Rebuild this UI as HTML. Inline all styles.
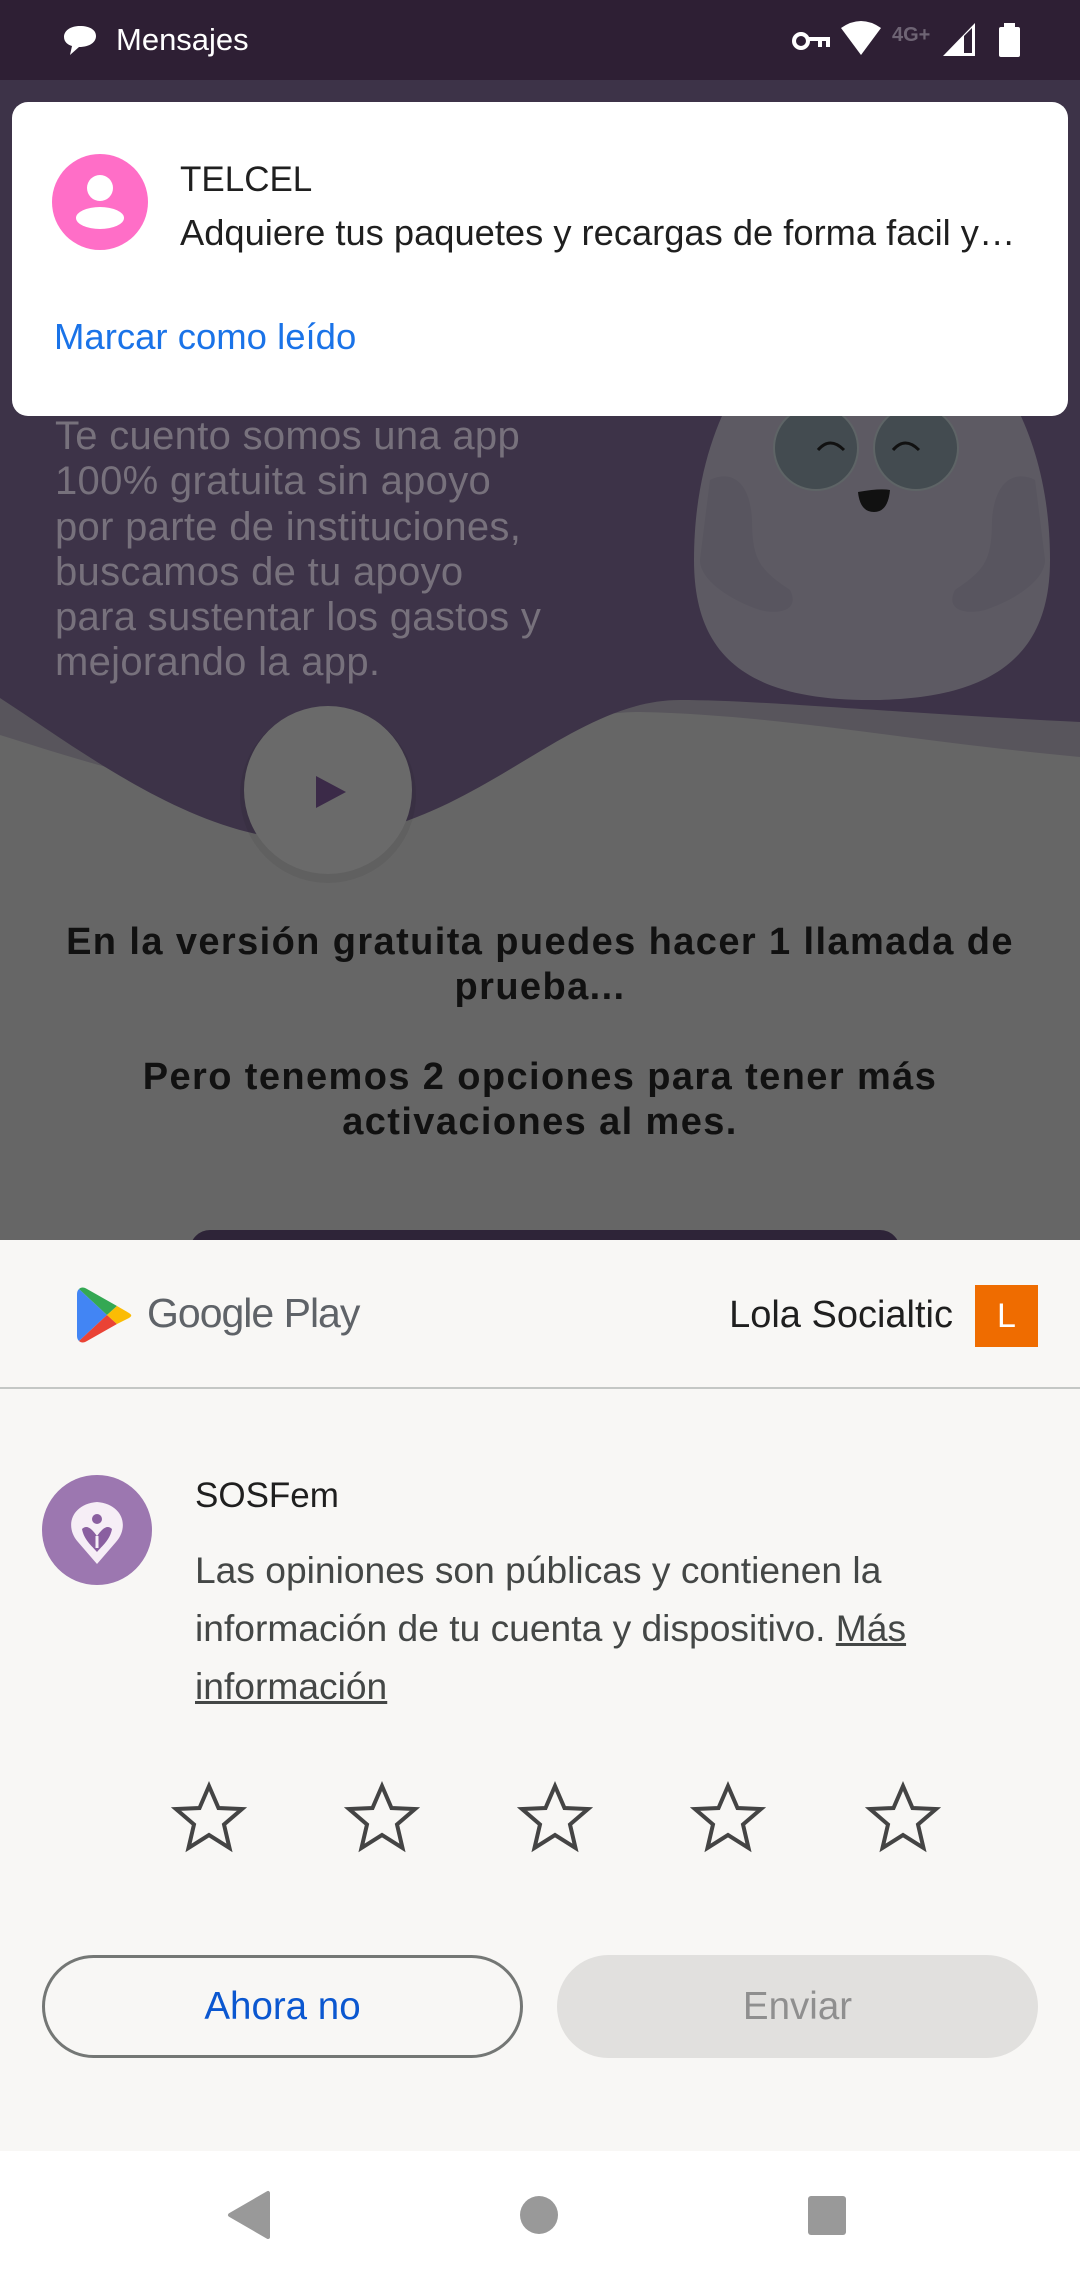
<!DOCTYPE html>
<html><head><meta charset="utf-8"><style>
*{margin:0;padding:0;box-sizing:border-box}
body{width:1080px;height:2280px;overflow:hidden;position:relative;font-family:"Liberation Sans",sans-serif;background:#666}
.abs{position:absolute}
.t{white-space:nowrap}
</style></head><body>
<svg class="abs" style="left:0;top:0" width="1080" height="1240">
<rect width="1080" height="1240" fill="#666666"/>
<path d="M0,0 H1080 V757 C900,740 780,715 640,712 C520,712 430,800 280,800 C170,790 80,760 0,735 Z" fill="#58555c"/>
<path d="M0,0 H1080 V722 C880,712 760,700 680,700 C560,700 470,840 300,840 C190,835 80,750 0,698 Z" fill="#3d3348"/>
<path d="M694,560 C694,400 780,300 870,300 C960,300 1050,400 1050,560 C1050,650 1000,700 870,700 C740,700 694,650 694,560 Z" fill="#5d5a63"/>
<path d="M710,480 C730,470 750,480 752,520 C752,560 760,570 790,590 C800,610 780,615 760,610 C730,600 700,580 700,560 Z" fill="#58555f"/>
<path d="M1035,480 C1015,470 995,480 992,520 C992,560 985,570 955,590 C945,610 965,615 985,610 C1015,600 1045,580 1045,560 Z" fill="#58555f"/>
<circle cx="816" cy="448" r="42" fill="#434b50" stroke="#5e6466" stroke-width="2"/>
<circle cx="916" cy="448" r="42" fill="#434b50" stroke="#5e6466" stroke-width="2"/>
<path d="M818,450 q12,-14 26,0" stroke="#111" stroke-width="3" fill="none"/>
<path d="M893,450 q12,-14 26,0" stroke="#111" stroke-width="3" fill="none"/>
<path d="M858,492 q22,-4 32,-2 q-2,22 -16,22 q-14,0 -16,-20 Z" fill="#111"/>
<circle cx="328" cy="795" r="88" fill="#000" opacity="0.06"/>
<circle cx="328" cy="790" r="84" fill="#6a6a6a"/>
<path d="M316,776 L346,792 L316,808 Z" fill="#3b2a48"/>
<rect x="190" y="1230" width="710" height="40" rx="20" fill="#2e2438"/>
</svg>
<div class="abs t" style="left:55px;top:414px;font-size:40px;line-height:45.3px;letter-spacing:0.3px;color:#77717c">Te cuento somos una app<br>100% gratuita sin apoyo<br>por parte de instituciones,<br>buscamos de tu apoyo<br>para sustentar los gastos y<br>mejorando la app.</div>
<div class="abs" style="left:0;width:1080px;top:920px;text-align:center;font-size:38px;font-weight:bold;line-height:45px;letter-spacing:1.4px;color:#111">En la versión gratuita puedes hacer 1 llamada de<br>prueba...<br><br>Pero tenemos 2 opciones para tener más<br>activaciones al mes.</div>

<div class="abs" style="left:0;top:0;width:1080px;height:80px;background:#2e1f34"></div>
<svg class="abs" style="left:62px;top:24px" width="36" height="34"><path d="M18,2 C8,2 2,7 2,13 C2,18 6,21 10,22 L8,31 L17,23 C28,23 34,18 34,12 C34,6 28,2 18,2 Z" fill="#fff"/></svg>
<div class="abs t" style="left:116px;top:22px;font-size:31px;color:#fff">Mensajes</div>
<svg class="abs" style="left:790px;top:20px" width="240" height="40">
<circle cx="11" cy="21" r="7" fill="none" stroke="#fff" stroke-width="4"/><path d="M18,19 H38 V27 M30,21 V27" stroke="#fff" stroke-width="4" fill="none"/>
<path d="M51,8 Q71,-6 91,8 L71,35 Z" fill="#fff"/>
<text x="102" y="21" font-family="Liberation Sans" font-weight="bold" font-size="20" fill="#6e6474">4G+</text>
<path d="M153,36 L185,3 V36 Z" fill="#fff"/><path d="M174,16 V33 H182 V8 Z" fill="#2e1f34"/>
<rect x="209" y="7" width="21" height="30" rx="2" fill="#fff"/><rect x="214" y="3" width="11" height="5" fill="#fff"/>
</svg>

<div class="abs" style="left:12px;top:102px;width:1056px;height:314px;background:#fff;border-radius:16px"></div>
<svg class="abs" style="left:52px;top:154px" width="96" height="96"><circle cx="48" cy="48" r="48" fill="#ff6ec7"/><circle cx="48" cy="34" r="13" fill="#fff"/><ellipse cx="48" cy="64" rx="24" ry="11" fill="#fff"/></svg>
<div class="abs t" style="left:180px;top:160px;font-size:35px;color:#1f1f1f">TELCEL</div>
<div class="abs t" style="left:180px;top:212px;font-size:36.3px;color:#1f1f1f">Adquiere tus paquetes y recargas de forma facil y…</div>
<div class="abs t" style="left:54px;top:316px;font-size:36.5px;color:#1a73e8">Marcar como leído</div>

<div class="abs" style="left:0;top:1240px;width:1080px;height:911px;background:#f8f7f5"></div>
<svg class="abs" style="left:77px;top:1286px" width="56" height="58">
<path d="M2,3 L30,29 L2,55 C0,53 0,51 0,49 V9 C0,7 0,5 2,3 Z" fill="#4285f4"/>
<path d="M2,3 C4,1 7,1 10,3 L40,20 L30,29 Z" fill="#34a853"/>
<path d="M2,55 C4,57 7,57 10,55 L40,38 L30,29 Z" fill="#ea4335"/>
<path d="M40,20 L52,27 C55,29 55,30 52,32 L40,38 L30,29 Z" fill="#fbbc04"/>
</svg>
<div class="abs t" style="left:147px;top:1290px;font-size:41px;color:#5f6368;letter-spacing:-1px">Google Play</div>
<div class="abs t" style="left:653px;top:1294px;font-size:38px;color:#1f1f1f;width:300px;text-align:right">Lola Socialtic</div>
<div class="abs" style="left:975px;top:1285px;width:63px;height:62px;background:#ef6c00;color:#fff;font-size:34px;text-align:center;line-height:62px">L</div>
<div class="abs" style="left:0;top:1387px;width:1080px;height:2px;background:#c4c7c5"></div>
<svg class="abs" style="left:42px;top:1474px" width="110" height="112"><circle cx="55" cy="56" r="55" fill="#9c77b0"/>
<path d="M55,90 L36,68 C22,52 30,30 55,28 C80,30 88,52 74,68 Z" fill="#f6eef6"/>
<circle cx="55" cy="45" r="5" fill="#8a5fa0"/><path d="M40,55 C45,50 50,55 55,62 C60,55 65,50 70,55 C68,66 60,72 55,78 C50,72 42,66 40,55 Z" fill="#8a5fa0"/><path d="M55,62 L55,74" stroke="#f6eef6" stroke-width="3"/>
</svg>
<div class="abs t" style="left:195px;top:1476px;font-size:35px;color:#1f1f1f">SOSFem</div>
<div class="abs" style="left:195px;top:1541px;width:870px;font-size:37.2px;line-height:58px;color:#444746">Las opiniones son públicas y contienen la<br>información de tu cuenta y dispositivo. <span style="text-decoration:underline">Más</span><br><span style="text-decoration:underline">información</span></div>
<svg class="abs" style="left:0;top:1778px" width="1080" height="80">
<defs><path id="s" d="M0,-33 L9.5,-11 L33,-10 L15,5.5 L20.5,29 L0,16 L-20.5,29 L-15,5.5 L-33,-10 L-9.5,-11 Z" fill="none" stroke="#444" stroke-width="4" stroke-linejoin="miter"/></defs>
<use href="#s" x="209" y="41"/><use href="#s" x="382" y="41"/><use href="#s" x="555" y="41"/><use href="#s" x="728" y="41"/><use href="#s" x="903" y="41"/>
</svg>
<div class="abs" style="left:42px;top:1955px;width:481px;height:103px;border:3px solid #747775;border-radius:52px;text-align:center;line-height:97px;font-size:38.5px;color:#0b57d0">Ahora no</div>
<div class="abs" style="left:557px;top:1955px;width:481px;height:103px;background:#e1e0de;border-radius:52px;text-align:center;line-height:103px;font-size:38.5px;color:#8f8f8f">Enviar</div>

<div class="abs" style="left:0;top:2151px;width:1080px;height:129px;background:#fff"></div>
<svg class="abs" style="left:0;top:2151px" width="1080" height="129">
<path d="M268,42 L268,86 L230,64 Z" fill="#999" stroke="#999" stroke-width="4" stroke-linejoin="round"/>
<circle cx="539" cy="64" r="19" fill="#999"/>
<rect x="808" y="45" width="38" height="39" rx="3" fill="#999"/>
</svg>
</body></html>
